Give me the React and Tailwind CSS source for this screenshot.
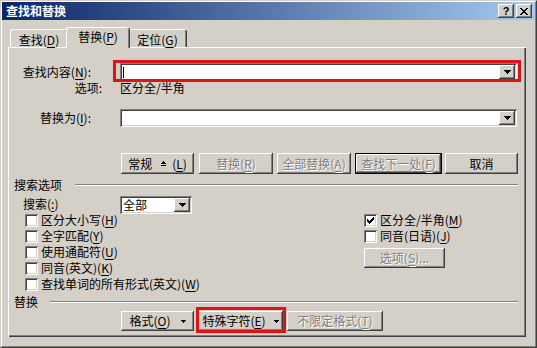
import React from "react";

const RAISED =
  "bg-[#d4d0c8] shadow-[inset_-1px_-1px_#404040,inset_1px_1px_#ffffff,inset_-2px_-2px_#808080,inset_2px_2px_#d4d0c8]";
const SUNKEN =
  "bg-white shadow-[inset_1px_1px_#808080,inset_-1px_-1px_#ffffff,inset_2px_2px_#404040,inset_-2px_-2px_#d4d0c8]";
const DIM = "text-[#808080] [text-shadow:1px_1px_0_#ffffff]";

const U = ({ children }) => <span className="underline underline-offset-2">{children}</span>;

const DownArrow = ({ small }) =>
  small ? (
    <svg width="5" height="3" viewBox="0 0 5 3" shapeRendering="crispEdges">
      <path d="M0 0H5V1H4V2H3V3H2V2H1V1H0Z" fill="#000" />
    </svg>
  ) : (
    <svg width="7" height="4" viewBox="0 0 7 4" shapeRendering="crispEdges">
      <path d="M0 0H7V1H6V2H5V3H4V4H3V3H2V2H1V1H0Z" fill="#000" />
    </svg>
  );

const Button = ({ className = "", disabled, primary, children }) => (
  <div
    className={`flex items-center justify-center shrink-0 whitespace-nowrap ${RAISED} ${
      primary ? "border border-black" : ""
    } ${disabled ? DIM : "text-black"} ${className}`}
  >
    {children}
  </div>
);

const Combo = ({ className = "", children }) => (
  <div className={`flex p-[2px] ${SUNKEN} ${className}`}>
    <div className="flex-1 flex items-center">{children}</div>
    <div className={`w-[16px] flex items-center justify-center ${RAISED}`}>
      <DownArrow />
    </div>
  </div>
);

const CheckRow = ({ checked, children }) => (
  <div className="h-[16px] flex items-center">
    <div className={`w-[13px] h-[13px] shrink-0 flex items-center justify-center ${SUNKEN}`}>
      {checked && (
        <svg width="7" height="7" viewBox="0 0 7 7" shapeRendering="crispEdges">
          <path
            d="M6 0H7V3H6V4H5V5H4V6H3V7H2V6H1V5H0V2H1V3H2V4H3V3H4V2H5V1H6Z"
            fill="#000"
          />
        </svg>
      )}
    </div>
    <span className="ml-[3px] whitespace-nowrap">{children}</span>
  </div>
);

const Tab = ({ active, className = "", children }) => (
  <div
    className={`relative flex items-center justify-center bg-[#d4d0c8] border-t border-l border-r border-t-white border-l-white border-r-[#404040] rounded-t-[3px] shadow-[inset_-1px_0_#808080] whitespace-nowrap ${
      active ? "z-10 pb-[2px]" : "pt-[2px]"
    } ${className}`}
  >
    {children}
  </div>
);

const RedMark = ({ className }) => (
  <div
    className={`absolute border-[3px] border-[#d9141b] shadow-[0_0_1px_#f4a0a0] pointer-events-none ${className}`}
  />
);

export default function App() {
  return (
    <div className="w-[537px] h-[348px] overflow-hidden bg-[#d4d0c8] border border-t-[#d4d0c8] border-l-[#d4d0c8] border-r-[#404040] border-b-[#404040] font-['Noto_Sans_CJK_SC',sans-serif] text-[12px] leading-[14px] text-black select-none">
      <div className="h-full border border-t-white border-l-white border-r-[#808080] border-b-[#808080] flex flex-col">
        {/* title bar */}
        <div className="h-[18px] shrink-0 flex items-center bg-[linear-gradient(90deg,#0a246a,#a6caf0)] pl-[4px] pr-[3px]">
          <span className="flex-1 text-white font-bold">查找和替换</span>
          <div
            className={`w-[16px] h-[14px] flex items-center justify-center font-['Liberation_Sans',sans-serif] font-bold text-[11px] ${RAISED}`}
          >
            ?
          </div>
          <div className={`ml-[2px] w-[16px] h-[14px] flex items-center justify-center ${RAISED}`}>
            <svg width="8" height="7" viewBox="0 0 8 7" shapeRendering="crispEdges">
              <path
                d="M0 0H2V1H3V2H5V1H6V0H8V1H7V2H6V3H5V4H6V5H7V6H8V7H6V6H5V5H3V6H2V7H0V6H1V5H2V4H3V3H2V2H1V1H0Z"
                fill="#000"
              />
            </svg>
          </div>
        </div>

        {/* tabs */}
        <div className="mt-[7px] pl-[8px] h-[20px] shrink-0 flex items-end">
          <Tab className="w-[58px] h-[18px]">
            查找(<U>D</U>)
          </Tab>
          <Tab active className="-ml-[2px] -mr-[2px] -mb-[1px] w-[64px] h-[21px]">
            替换(<U>P</U>)
          </Tab>
          <Tab className="w-[59px] h-[18px]">
            定位(<U>G</U>)
          </Tab>
        </div>

        {/* tab panel */}
        <div className="ml-[6px] w-[518px] h-[290px] shrink-0 flex flex-col shadow-[inset_1px_1px_#ffffff,inset_-1px_-1px_#404040,inset_-2px_-2px_#808080]">
          <div className="mt-[16px] h-[18px] flex items-center">
            <span className="w-[83px] text-right whitespace-nowrap">
              查找内容(<U>N</U>):
            </span>
            <div className="ml-[29px] relative flex">
              <Combo className="w-[397px] h-[18px]">
                <div className="ml-[1px] w-px h-[11px] bg-black" />
              </Combo>
              <RedMark className="-left-[7px] -top-[3px] -right-[4px] -bottom-[1px]" />
            </div>
          </div>

          <div className="h-[14px] flex items-center">
            <span className="w-[94px] text-right">选项:</span>
            <span className="ml-[18px]">区分全/半角</span>
          </div>

          <div className="mt-[14px] h-[18px] flex items-center">
            <span className="w-[83px] text-right whitespace-nowrap">
              替换为(<U>I</U>):
            </span>
            <Combo className="ml-[29px] w-[397px] h-[18px]" />
          </div>

          <div className="mt-[26px] h-[21px] flex pl-[113px]">
            <Button className="w-[73px]">
              <span>常规</span>
              <svg className="ml-[9px]" width="5" height="6" viewBox="0 0 5 6" shapeRendering="crispEdges">
                <path d="M2 0H3V1H4V2H5V3H0V2H1V1H2Z M0 4H5V5H0Z" fill="#000" />
              </svg>
              <span className="ml-[6px]">
                (<U>L</U>)
              </span>
            </Button>
            <Button disabled className="ml-[5px] w-[74px]">
              替换(<U>R</U>)
            </Button>
            <Button disabled className="ml-[4px] w-[74px]">
              全部替换(<U>A</U>)
            </Button>
            <Button disabled primary className="ml-[4px] w-[87px]">
              查找下一处(<U>F</U>)
            </Button>
            <Button className="ml-[3px] w-[73px]">取消</Button>
          </div>

          <div className="mt-[4px] h-[14px] flex items-center pl-[6px]">
            <span className="w-[61px]">搜索选项</span>
            <div className="w-[443px] border-t border-t-[#808080] border-b border-b-white" />
          </div>

          <div className="mt-[4px] h-[16px] flex items-start pl-[15px]">
            <span className="w-[97px] mt-[1px] leading-[14px]">
              搜索(<U>:</U>)
            </span>
            <Combo className="w-[72px] h-[18px] relative z-10">
              <span className="ml-[1px]">全部</span>
            </Combo>
          </div>

          <div className="flex">
            <div className="pl-[17px] w-[356px] flex flex-col">
              <CheckRow>
                区分大小写(<U>H</U>)
              </CheckRow>
              <CheckRow>
                全字匹配(<U>Y</U>)
              </CheckRow>
              <CheckRow>
                使用通配符(<U>U</U>)
              </CheckRow>
              <CheckRow>
                同音(英文)(<U>K</U>)
              </CheckRow>
              <CheckRow>
                查找单词的所有形式(英文)(<U>W</U>)
              </CheckRow>
            </div>
            <div className="flex flex-col">
              <CheckRow checked>
                区分全/半角(<U>M</U>)
              </CheckRow>
              <CheckRow>
                同音(日语)(<U>J</U>)
              </CheckRow>
              <Button disabled className="mt-[4px] w-[81px] h-[20px]">
                选项(<U>S</U>)...
              </Button>
            </div>
          </div>

          <div className="mt-[3px] h-[14px] flex items-center pl-[6px]">
            <span className="w-[36px]">替换</span>
            <div className="w-[468px] border-t border-t-[#808080] border-b border-b-white" />
          </div>

          <div className="mt-[2px] h-[20px] flex pl-[113px]">
            <Button className="w-[73px]">
              <span>
                格式(<U>O</U>)
              </span>
              <span className="ml-[10px] flex">
                <DownArrow small />
              </span>
            </Button>
            <div className="ml-[4px] relative flex">
              <Button className="w-[85px]">
                <span>
                  特殊字符(<U>E</U>)
                </span>
                <span className="ml-[8px] flex">
                  <DownArrow small />
                </span>
              </Button>
              <RedMark className="-left-[2px] -top-[4px] -right-[3px] -bottom-[2px]" />
            </div>
            <Button disabled className="ml-[4px] w-[96px]">
              不限定格式(<U>T</U>)
            </Button>
          </div>
        </div>
      </div>
    </div>
  );
}
